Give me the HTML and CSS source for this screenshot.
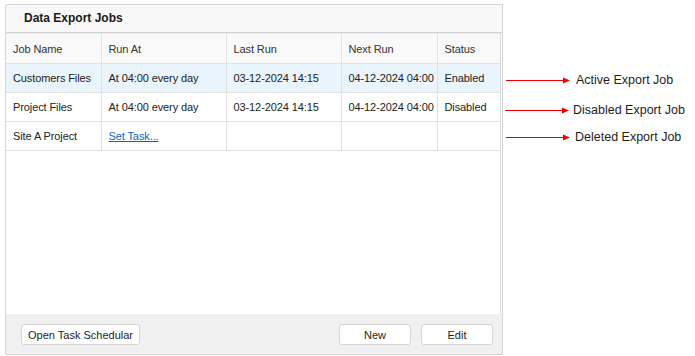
FILE: index.html
```html
<!DOCTYPE html>
<html>
<head>
<meta charset="utf-8">
<link rel="stylesheet" href="styles.css">
</head>
<body>
<div class="page">
  <div class="panel">
    <div class="title">Data Export Jobs</div>
    <div class="table-wrap">
      <table class="jobs">
        <colgroup>
          <col class="c1"><col class="c2"><col class="c3"><col class="c4"><col class="c5">
        </colgroup>
        <thead>
          <tr><th>Job Name</th><th>Run At</th><th>Last Run</th><th>Next Run</th><th>Status</th></tr>
        </thead>
        <tbody>
          <tr class="selected"><td>Customers Files</td><td>At 04:00 every day</td><td>03-12-2024 14:15</td><td>04-12-2024 04:00</td><td>Enabled</td></tr>
          <tr><td>Project Files</td><td>At 04:00 every day</td><td>03-12-2024 14:15</td><td>04-12-2024 04:00</td><td>Disabled</td></tr>
          <tr><td>Site A Project</td><td><a class="link" href="#">Set Task...</a></td><td></td><td></td><td></td></tr>
        </tbody>
      </table>
    </div>
    <div class="footer">
      <button class="btn btn-wide">Open Task Schedular</button>
      <div class="spacer"></div>
      <button class="btn">New</button>
      <button class="btn">Edit</button>
    </div>
  </div>
  <div class="notes">
    <div class="note note-1">
      <svg class="arrow" width="64" height="7" viewBox="0 0 64 7"><rect x="0" y="3" width="58" height="1" fill="#ee0000"/><polygon points="57,0.5 64,3.5 57,6.5" fill="#ee0000"/></svg>
      <span>Active Export Job</span>
    </div>
    <div class="note note-2">
      <svg class="arrow" width="64" height="7" viewBox="0 0 64 7"><rect x="0" y="3" width="58" height="1" fill="#ee0000"/><polygon points="57,0.5 64,3.5 57,6.5" fill="#ee0000"/></svg>
      <span>Disabled Export Job</span>
    </div>
    <div class="note note-3">
      <svg class="arrow" width="64" height="7" viewBox="0 0 64 7"><rect x="0" y="3" width="58" height="1" fill="#ee0000"/><polygon points="57,0.5 64,3.5 57,6.5" fill="#ee0000"/></svg>
      <span>Deleted Export Job</span>
    </div>
  </div>
</div>
</body>
</html>
```

FILE: styles.css
```css
html, body {
  margin: 0;
  padding: 0;
  background: #ffffff;
}
body {
  font-family: "Liberation Sans", Arial, sans-serif;
  font-size: 11px;
  color: #1e1e1e;
}
.page {
  display: flex;
  align-items: flex-start;
  padding: 4px 0 0 5px;
}
.panel {
  width: 496px;
  height: 349px;
  border: 1px solid #d4d4d4;
  border-radius: 2px 0 0 2px;
  display: flex;
  flex-direction: column;
  background: #ffffff;
}
.title {
  height: 27px;
  line-height: 27px;
  padding-left: 18px;
  background: #f8f8f8;
  border-bottom: 1px solid #d2d2d2;
  font-weight: bold;
  font-size: 12px;
  color: #1a1a1a;
}
.table-wrap {
  flex: 1;
  width: 494px;
  border-right: 1px solid #dcdcdc;
  background: #ffffff;
}
.jobs {
  border-collapse: collapse;
  table-layout: fixed;
  width: 494px;
}
.c1 { width: 95px; }
.c2 { width: 125px; }
.c3 { width: 115px; }
.c4 { width: 96px; }
.c5 { width: 63px; }
.jobs th, .jobs td {
  height: 28px;
  padding: 0 0 0 7px;
  text-align: left;
  font-weight: normal;
  white-space: nowrap;
  overflow: hidden;
  border-right: 1px solid #e2e2e2;
  border-bottom: 1px solid #e2e2e2;
  color: #222222;
  letter-spacing: -0.1px;
}
.jobs th {
  height: 29px;
  background: #f9f9f9;
  color: #333333;
  border-top: 1px solid #ececec;
}
.jobs td:last-child, .jobs th:last-child {
  border-right: none;
}
.jobs tr.selected td {
  background: #eaf4fd;
}
.link {
  color: #0a64c8;
  text-decoration: underline;
}
.footer {
  height: 40px;
  background: #f0f0f0;
  display: flex;
  align-items: center;
  padding: 0 9px 0 15px;
  gap: 10px;
}
.spacer {
  flex: 1;
}
.btn {
  font-family: "Liberation Sans", Arial, sans-serif;
  font-size: 11px;
  color: #1e1e1e;
  background: #ffffff;
  border: 1px solid #d6d6d6;
  border-radius: 3px;
  height: 21px;
  width: 72px;
  padding: 0;
  margin-top: 1px;
}
.btn-wide {
  width: 119px;
}
.notes {
  display: flex;
  flex-direction: column;
  padding-left: 2px;
}
.note {
  display: flex;
  align-items: center;
  height: 16px;
  font-size: 12.5px;
  color: #1e1e1e;
}
.note .arrow {
  flex: none;
}
.note-1 {
  margin-top: 68px;
  padding-left: 1px;
}
.note-1 span { margin-left: 6px; }
.note-2 {
  margin-top: 14px;
}
.note-2 span { margin-left: 4px; }
.note-3 {
  margin-top: 11px;
  padding-left: 1px;
}
.note-3 span { margin-left: 5px; }
```
